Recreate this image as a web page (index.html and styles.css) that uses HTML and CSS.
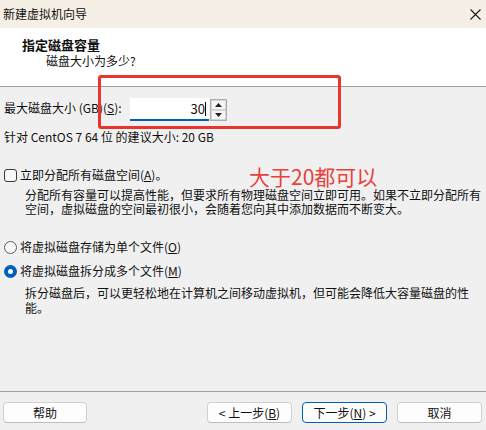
FILE: index.html
```html
<!DOCTYPE html>
<html lang="zh-CN">
<head>
<meta charset="utf-8">
<title>新建虚拟机向导</title>
<link rel="stylesheet" href="styles.css">
</head>
<body>
<div class="window">
  <div class="titlebar">
    <span class="title">新建虚拟机向导</span>
    <svg class="close" width="11" height="11" viewBox="0 0 11 11"><path d="M0.5 0.5 L10.5 10.5 M10.5 0.5 L0.5 10.5" stroke="#1a1a1a" stroke-width="1.1" fill="none"/></svg>
  </div>
  <div class="header">
    <div class="h-title">指定磁盘容量</div>
    <div class="h-sub">磁盘大小为多少?</div>
  </div>
  <div class="content">
    <div class="size-row">
      <span class="size-label">最大磁盘大小 (GB)(<u>S</u>):</span>
      <div class="input"><span class="value">30</span><span class="caret"></span></div>
      <div class="spin">
        <div class="spin-btn"><svg width="7" height="4" viewBox="0 0 7 4"><path d="M0 4 L3.5 0 L7 4 Z" fill="#222"/></svg></div>
        <div class="spin-btn"><svg width="7" height="4" viewBox="0 0 7 4"><path d="M0 0 L3.5 4 L7 0 Z" fill="#222"/></svg></div>
      </div>
    </div>
    <div class="hint">针对 CentOS 7 64 位 的建议大小: 20 GB</div>
    <div class="option opt-alloc"><span class="checkbox"></span><span>立即分配所有磁盘空间(<u>A</u>)。</span></div>
    <p class="desc desc-alloc">分配所有容量可以提高性能，但要求所有物理磁盘空间立即可用。如果不立即分配所有<br>空间，虚拟磁盘的空间最初很小，会随着您向其中添加数据而不断变大。</p>
    <div class="option opt-single"><span class="radio"></span><span>将虚拟磁盘存储为单个文件(<u>O</u>)</span></div>
    <div class="option opt-multi"><span class="radio checked"></span><span>将虚拟磁盘拆分成多个文件(<u>M</u>)</span></div>
    <p class="desc desc-split">拆分磁盘后，可以更轻松地在计算机之间移动虚拟机，但可能会降低大容量磁盘的性<br>能。</p>
  </div>
  <div class="footer">
    <button class="btn btn-help">帮助</button>
    <div class="nav">
      <button class="btn">&lt; 上一步(<u>B</u>)</button>
      <button class="btn btn-default">下一步(<u>N</u>) &gt;</button>
      <button class="btn">取消</button>
    </div>
  </div>
  <div class="annot-box"></div>
  <div class="annot-text">大于20都可以</div>
</div>
</body>
</html>
```
FILE: styles.css
```css
html, body {
  margin: 0;
  padding: 0;
}
body {
  font-family: "Noto Sans CJK SC", "Noto Sans", sans-serif;
  font-size: 12px;
  color: #111;
  background: #f0f0f0;
}
.window {
  position: relative;
  width: 486px;
  height: 430px;
  overflow: hidden;
  background: #f0f0f0;
}
.titlebar {
  height: 28px;
  background: #f6efe5;
  display: flex;
  align-items: center;
  justify-content: space-between;
  padding: 0 5px 0 3px;
  box-sizing: border-box;
}
.title {
  line-height: 16px;
  margin-top: -1px;
}
.close {
  display: block;
}
.header {
  height: 58px;
  background: #fff;
  border-bottom: 1px solid #a0a0a0;
  padding-top: 9px;
  box-sizing: content-box;
}
.header { height: 49px; }
.h-title {
  font-weight: bold;
  font-size: 13px;
  line-height: 16px;
  padding-left: 22px;
}
.h-sub {
  line-height: 16px;
  padding-left: 46px;
}
.content {
  height: 304px;
  padding-left: 4px;
  box-sizing: border-box;
  overflow: hidden;
}
.size-row {
  margin-top: 11px;
  height: 23px;
  display: flex;
  align-items: center;
}
.size-label {
  width: 126px;
  line-height: 16px;
  margin-top: -3px;
  white-space: nowrap;
}
.input {
  width: 79px;
  height: 23px;
  box-sizing: border-box;
  background: #fff;
  border-bottom: 2px solid #0060b8;
  display: flex;
  align-items: center;
  justify-content: flex-end;
  padding-right: 3px;
  font-size: 13px;
}
.value {
  line-height: 16px;
}
.caret {
  width: 1px;
  height: 14px;
  background: #000;
  margin-left: 0;
}
.spin {
  margin-left: 1px;
  width: 17px;
  height: 22px;
  border: 1px solid #adadad;
  box-sizing: border-box;
  display: flex;
  flex-direction: column;
  background: #f0f0f0;
}
.spin-btn {
  flex: 1;
  border: 1px solid #d4d4d4;
  background: #f5f5f5;
  display: flex;
  align-items: center;
  justify-content: center;
}
.spin-btn svg {
  display: block;
}
.hint {
  margin-top: 8px;
  line-height: 16px;
  white-space: nowrap;
}
.option {
  display: flex;
  align-items: center;
  line-height: 16px;
  white-space: nowrap;
}
.opt-alloc { margin-top: 22px; }
.opt-single { margin-top: 23px; }
.opt-multi { margin-top: 8px; }
.checkbox {
  width: 13px;
  height: 13px;
  box-sizing: border-box;
  border: 1px solid #3a3a3a;
  border-radius: 3px;
  background: #f8f8f8;
  margin-right: 3px;
}
.radio {
  width: 13px;
  height: 13px;
  box-sizing: border-box;
  border: 1px solid #5a5a5a;
  border-radius: 50%;
  background: #f8f8f8;
  margin-right: 3px;
  position: relative;
}
.radio.checked {
  border: 4px solid #0060b8;
  background: #fff;
}
.desc {
  margin: 0;
  padding-left: 21px;
  white-space: nowrap;
}
.desc-alloc {
  margin-top: 5px;
  line-height: 14px;
}
.desc-split {
  margin-top: 6px;
  line-height: 15px;
}
.footer {
  border-top: 1px solid #a0a0a0;
  padding: 10px 4px 0 3px;
  display: flex;
  justify-content: space-between;
}
.nav {
  display: flex;
  gap: 10px;
}
.btn {
  font-family: inherit;
  font-size: 12px;
  color: #111;
  width: 85px;
  height: 21px;
  padding: 0;
  line-height: 16px;
  background: #fdfdfd;
  border: 1px solid #d0d0d0;
  border-bottom-color: #bdbdbd;
  border-radius: 4px;
  box-sizing: border-box;
}
.btn-help {
  width: 84px;
}
.btn-default {
  border: 1px solid #0060b8;
}
.annot-box {
  position: absolute;
  left: 98px;
  top: 75px;
  width: 243px;
  height: 54px;
  box-sizing: border-box;
  border: 3px solid #e8352d;
  border-radius: 3px;
}
.annot-text {
  position: absolute;
  left: 249px;
  top: 164px;
  font-size: 21px;
  line-height: 24px;
  color: #e8403a;
  white-space: nowrap;
}
```
